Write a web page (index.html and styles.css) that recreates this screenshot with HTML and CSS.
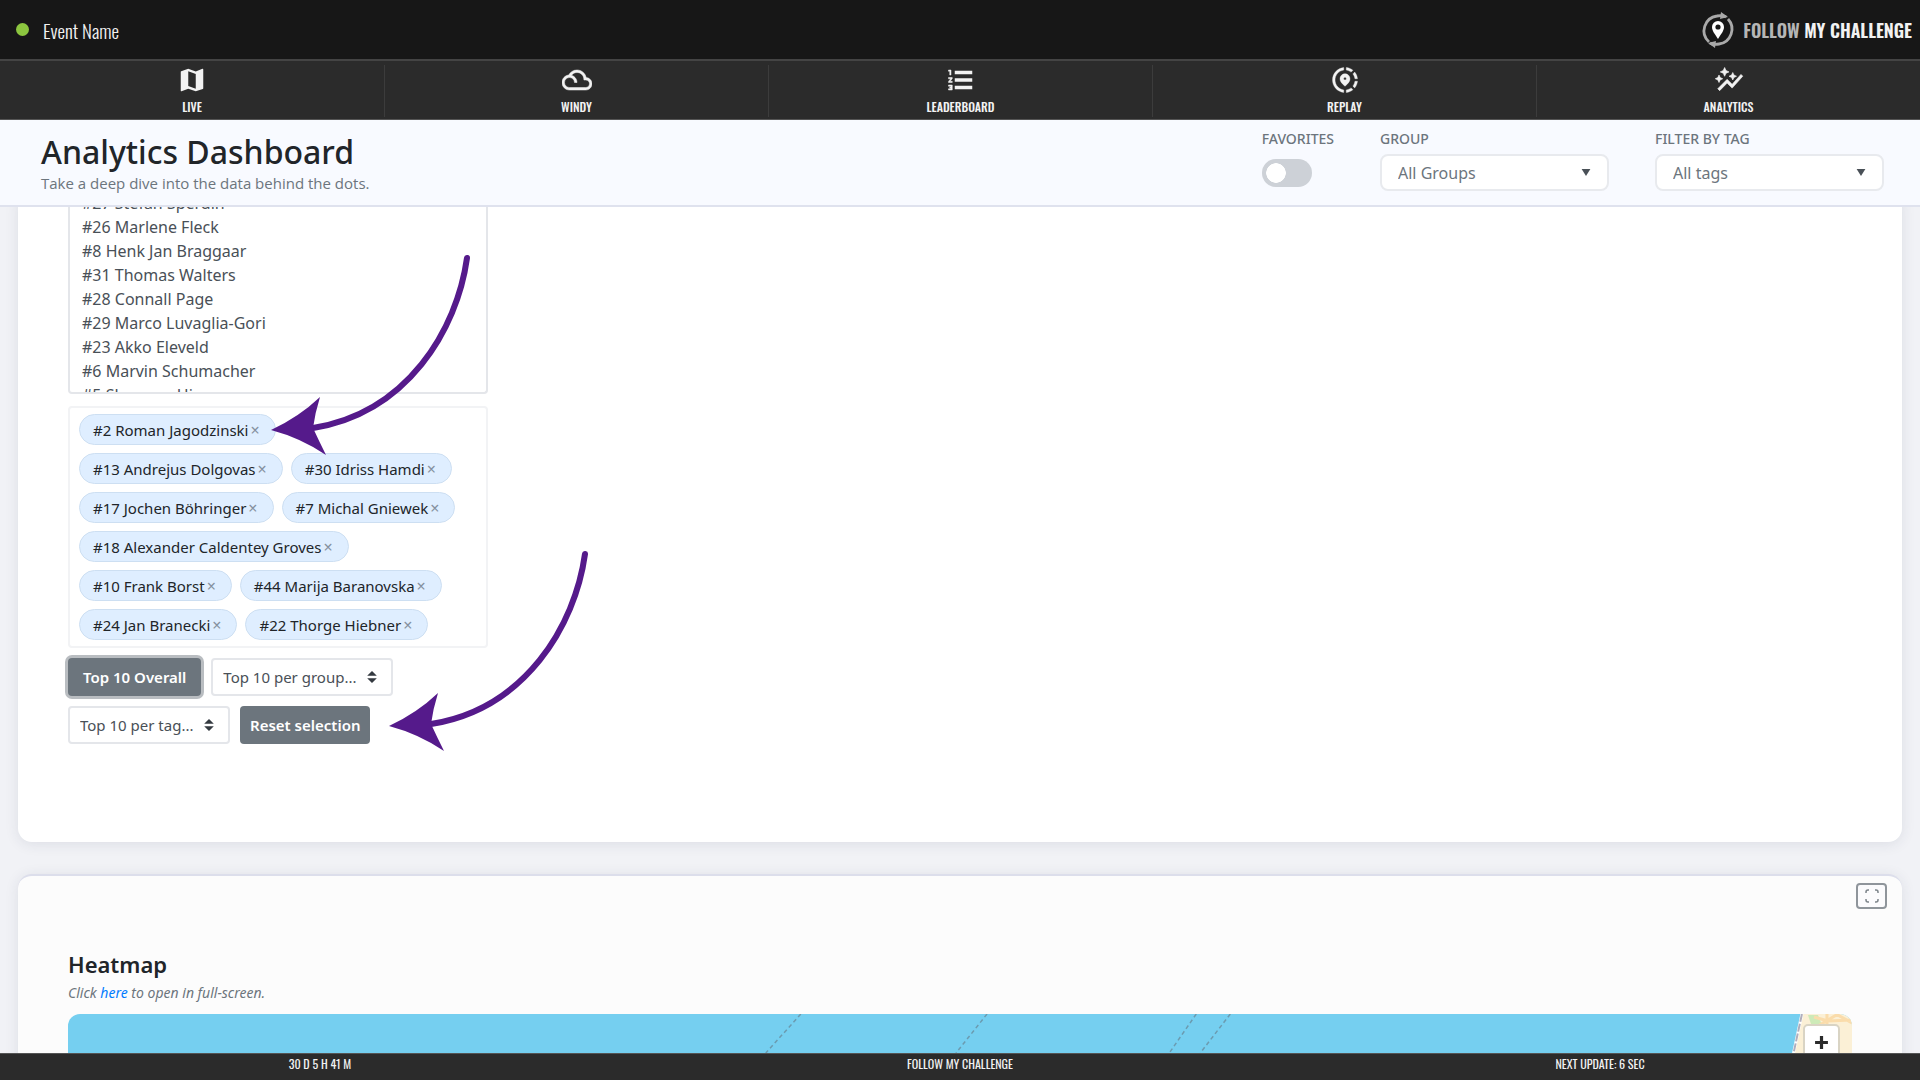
FILE: index.html
```html
<!DOCTYPE html>
<html lang="en">
<head>
    <meta charset="UTF-8">
    <meta name="viewport" content="width=device-width, initial-scale=1.0">
    <title>Analytics Dashboard</title>
    <link rel="stylesheet" href="styles.css">
</head>
<body>
    <header class="topbar">
        <div class="event"><span class="status-dot"></span>Event Name</div>
        <a href="#" class="brand">
            <svg class="brand-logo" viewBox="0 0 36 36">
                <g fill="none" stroke="#a9a9a9" stroke-width="2.8">
                    <path d="M9 30A15 15 0 0 1 17 4q6-1 9 1"/>
                    <path d="M28 7A15 15 0 0 1 19 32q-6 1-9-1"/>
                </g>
                <path d="M21 0l7 5-8 2zM15 36l-7-5 8-2z" fill="#a9a9a9"/>
                <path d="M18 27c-3-5-6-8-6-12a6 6 0 0 1 12 0c0 4-3 7-6 12z" fill="#fff"/>
                <circle cx="18" cy="15" r="2.6" fill="#171717"/>
            </svg>
            <span><span class="brand-light">FOLLOW</span> MY CHALLENGE</span>
        </a>
    </header>

    <nav class="tabs">
        <a href="#" class="tab">
            <svg viewBox="0 0 24 24"><path d="M20.5 3l-.16.03L15 5.100 9 3 3.360 4.900c-.21.07-.36.25-.36.48V20.500c0 .28.22.5.5.5l.16-.03L9 18.900l6 2.100 5.640-1.900c.21-.07.36-.25.36-.48V3.500c0-.28-.22-.5-.5-.5zM15 19l-6-2.110V5l6 2.110V19z"/></svg>
            LIVE
        </a>
        <a href="#" class="tab">
            <svg viewBox="0 0 24 24"><path d="M19.350 10.040C18.670 6.590 15.640 4 12 4 9.110 4 6.610 5.640 5.360 8.040 2.350 8.360 0 10.900 0 14c0 3.310 2.690 6 6 6h13c2.760 0 5-2.240 5-5 0-2.640-2.050-4.780-4.650-4.960zM19 18H6c-2.210 0-4-1.790-4-4s1.790-4 4-4 4 1.790 4 4h2c0-2.760-1.860-5.080-4.400-5.780C8.610 6.880 10.200 6 12 6c3.030 0 5.500 2.470 5.500 5.500v.5H19c1.650 0 3 1.350 3 3s-1.350 3-3 3z" stroke="#f2f2f2" stroke-width=".4"/></svg>
            WINDY
        </a>
        <a href="#" class="tab">
            <svg viewBox="0 0 24 24"><path d="M2 17h2v.5H3v1h1v.5H2v1h3v-4H2v1zm1-9h1V4H2v1h1v3zm-1 3h1.800L2 13.100v.9h3v-1H3.200L5 10.900V10H2v1z" stroke="#f2f2f2" stroke-width=".4"/><path d="M7 4.600v2.800h14V4.600zM7 10.600v2.800h14v-2.800zM7 16.600v2.800h14v-2.800z"/></svg>
            LEADERBOARD
        </a>
        <a href="#" class="tab">
            <svg viewBox="0 0 24 24"><path d="M13.020 19.930v2.020c2.010-.2 3.840-1 5.320-2.210l-1.420-1.430c-1.110.86-2.440 1.440-3.900 1.620zM4.030 12c0-4.050 3.030-7.410 6.950-7.930V2.050C5.950 2.580 2.030 6.840 2.030 12c0 5.160 3.920 9.420 8.950 9.950v-2.020c-3.920-.52-6.950-3.880-6.950-7.930zM19.950 11h2.020c-.2-2.010-1-3.840-2.210-5.320l-1.430 1.430c.86 1.100 1.440 2.430 1.620 3.890zM18.340 4.260c-1.480-1.210-3.320-2.010-5.320-2.210v2.020c1.460.18 2.790.76 3.900 1.620l1.420-1.430zM18.330 16.900l1.430 1.420c1.210-1.480 2.010-3.310 2.210-5.320h-2.020c-.18 1.460-.76 2.790-1.620 3.900zM16 11.100C16 8.610 14.100 7 12 7s-4 1.610-4 4.100c0 1.660 1.330 3.630 4 5.900 2.670-2.270 4-4.240 4-5.900zm-4 .9c-.59 0-1.070-.48-1.070-1.070S11.410 9.860 12 9.860s1.070.48 1.070 1.070S12.590 12 12 12z" stroke="#f2f2f2" stroke-width=".3"/></svg>
            REPLAY
        </a>
        <a href="#" class="tab">
            <svg viewBox="0 0 24 24"><path d="M14.060 9.940L12 9l2.060-.94L15 6l.94 2.060L18 9l-2.060.94L15 12l-.94-2.060zM4 14l.94-2.060L7 11l-2.060-.94L4 8l-.94 2.060L1 11l2.060.94L4 14zm4.500-5l1.090-2.410L12 5.500 9.590 4.410 8.500 2 7.410 4.410 5 5.500l2.410 1.090L8.500 9zm-4 11.500l6-6.010 4 4L23 8.930l-1.410-1.410-7.090 7.970-4-4L3 19l1.500 1.500z" stroke="#f2f2f2" stroke-width=".5"/></svg>
            ANALYTICS
        </a>
    </nav>

    <section class="page-head">
        <div>
            <h1>Analytics Dashboard</h1>
            <p class="lead">Take a deep dive into the data behind the dots.</p>
        </div>
        <form class="filters">
            <div class="filter">
                <label for="favorites">FAVORITES</label>
                <input type="checkbox" id="favorites" class="switch">
            </div>
            <div class="filter">
                <label for="group">GROUP</label>
                <select id="group" class="pick"><option>All Groups</option></select>
            </div>
            <div class="filter">
                <label for="tag">FILTER BY TAG</label>
                <select id="tag" class="pick"><option>All tags</option></select>
            </div>
        </form>
    </section>

    <main class="content">
        <section class="card card-riders">
            <div class="selector">
                <ul class="riders">
                    <li>#27 Stefan Sperdin</li>
                    <li>#26 Marlene Fleck</li>
                    <li>#8 Henk Jan Braggaar</li>
                    <li>#31 Thomas Walters</li>
                    <li>#28 Connall Page</li>
                    <li>#29 Marco Luvaglia-Gori</li>
                    <li>#23 Akko Eleveld</li>
                    <li>#6 Marvin Schumacher</li>
                    <li>#5 Shannon Hines</li>
                </ul>
                <div class="chips">
                    <span class="chip">#2 Roman Jagodzinski<button type="button" aria-label="Remove">×</button></span>
                    <span class="chip">#13 Andrejus Dolgovas<button type="button" aria-label="Remove">×</button></span>
                    <span class="chip">#30 Idriss Hamdi<button type="button" aria-label="Remove">×</button></span>
                    <span class="chip">#17 Jochen Böhringer<button type="button" aria-label="Remove">×</button></span>
                    <span class="chip">#7 Michal Gniewek<button type="button" aria-label="Remove">×</button></span>
                    <span class="chip">#18 Alexander Caldentey Groves<button type="button" aria-label="Remove">×</button></span>
                    <span class="chip">#10 Frank Borst<button type="button" aria-label="Remove">×</button></span>
                    <span class="chip">#44 Marija Baranovska<button type="button" aria-label="Remove">×</button></span>
                    <span class="chip">#24 Jan Branecki<button type="button" aria-label="Remove">×</button></span>
                    <span class="chip">#22 Thorge Hiebner<button type="button" aria-label="Remove">×</button></span>
                </div>
                <div class="actions">
                    <button type="button" class="btn btn-active">Top 10 Overall</button>
                    <select class="custom-select" aria-label="Top 10 per group"><option>Top 10 per group...</option></select>
                </div>
                <div class="actions">
                    <select class="custom-select" aria-label="Top 10 per tag"><option>Top 10 per tag...</option></select>
                    <button type="button" class="btn">Reset selection</button>
                </div>
            </div>
            <svg class="arrow arrow-chip" viewBox="0 0 208 208">
                <path class="arrow-line" d="M200 5C190 77 140 160 46 175"/>
                <path class="arrow-head" d="M4 177Q32 164 53 144Q48 160 46 175Q52 188 59 202Q34 185 4 177z"/>
            </svg>
            <svg class="arrow arrow-reset" viewBox="0 0 208 208">
                <path class="arrow-line" d="M200 5C190 77 140 160 46 175"/>
                <path class="arrow-head" d="M4 177Q32 164 53 144Q48 160 46 175Q52 188 59 202Q34 185 4 177z"/>
            </svg>
        </section>

        <section class="card card-heatmap">
            <button type="button" class="expand" aria-label="Full screen">
                <svg viewBox="0 0 14 14"><path d="M1 4V3q0-2 2-2h1M10 1h1q2 0 2 2v1M13 10v1q0 2-2 2h-1M4 13H3q-2 0-2-2v-1"/></svg>
            </button>
            <h2>Heatmap</h2>
            <p class="hint">Click <a href="#">here</a> to open in full-screen.</p>
            <div class="map">
                <svg class="map-tiles" viewBox="0 0 1782 60" preserveAspectRatio="xMaxYMin slice">
                    <rect width="1782" height="60" fill="#75cff0"/>
                    <path class="route" d="M732 0L697 39M918 0L887 39M1127 0L1100 39M1161 0L1131 39"/>
                    <path d="M1732 0h50v60h-62z" fill="#fbf0d6"/>
                    <path d="M1738 1h10l4 10-10 2z" fill="#cdeab8"/>
                    <path d="M1744 3l14 4 24-1M1757 0v12M1748 12l20-12M1766 0l16 9" fill="none" stroke="#fadcab" stroke-width="3"/>
                    <path d="M1732 0l-9 42" fill="none" stroke="#fff" stroke-width="3"/>
                    <path d="M1732 0l-9 42" fill="none" stroke="#b0aebc" stroke-width="2" stroke-dasharray="8 2"/>
                </svg>
                <button type="button" class="zoom-in" aria-label="Zoom in">
                    <svg viewBox="0 0 14 14"><path d="M7 1v12M1 7h12"/></svg>
                </button>
            </div>
        </section>
    </main>

    <footer class="bottombar">
        <span>30 D 5 H 41 M</span>
        <span>FOLLOW MY CHALLENGE</span>
        <span>NEXT UPDATE: 6 SEC</span>
    </footer>
</body>
</html>
```

FILE: styles.css
```css
:root {
    --dark: #171717;
    --bar: #2b2b2b;
    --text: #212529;
    --muted: #6c757d;
    --arrow: #551a8b;
    --narrow: "Oswald", "Open Sans Condensed", "Roboto Condensed", "Liberation Sans Narrow", "Roboto", sans-serif;
}
* {
    box-sizing: border-box;
    margin: 0;
    padding: 0;
}
body {
    font-family: "Segoe UI", "Noto Sans", sans-serif;
    font-size: 16px;
    color: var(--text);
    background: #f1f2f6;
    height: 100vh;
    display: flex;
    flex-direction: column;
    overflow: hidden;
}
a {
    text-decoration: none;
    color: inherit;
}
button,
select {
    font: inherit;
}

/* top bars */
.topbar {
    height: 61px;
    flex: none;
    display: flex;
    align-items: center;
    justify-content: space-between;
    padding: 0 8px 0 16px;
    background: var(--dark);
    border-bottom: 2px solid #444;
    color: #f2f2f2;
}
.event {
    display: flex;
    align-items: center;
    gap: 14px;
    font-family: var(--narrow);
    font-size: 19px;
    line-height: 24px;
    font-weight: 300;
}
.status-dot {
    width: 13px;
    height: 13px;
    border-radius: 50%;
    background: #8cc63f;
}
.brand {
    display: flex;
    align-items: center;
    gap: 7px;
    font-family: var(--narrow);
    font-size: 18px;
    font-weight: 600;
}
.brand-logo {
    width: 36px;
    height: 36px;
}
.brand-light {
    color: #b5b5b5;
}
.tabs {
    height: 59px;
    flex: none;
    display: grid;
    grid-template-columns: repeat(5, 1fr);
    padding: 4px 0 2px;
    background: var(--bar);
    border-bottom: 1px solid #555;
}
.tab {
    display: flex;
    flex-direction: column;
    align-items: center;
    gap: 3px;
    font-family: var(--narrow);
    font-size: 12px;
    line-height: 18px;
    font-weight: 500;
    color: #f2f2f2;
    border-left: 1px solid #3c3c3c;
}
.tab:first-child {
    border-left: none;
}
.tab svg {
    width: 30px;
    height: 30px;
    fill: #f2f2f2;
}

/* title and filters */
.page-head {
    height: 87px;
    flex: none;
    display: flex;
    justify-content: space-between;
    padding: 9px 36px 0 41px;
    background: #f8faff;
    border-bottom: 2px solid #dfe2ee;
}
h1 {
    font-size: 32px;
    line-height: 46px;
    font-weight: 500;
}
.lead {
    font-family: "Open Sans", sans-serif;
    font-size: 15px;
    line-height: 16px;
    color: var(--muted);
}
.filters {
    display: flex;
    gap: 46px;
}
.filter {
    display: flex;
    flex-direction: column;
    gap: 5px;
}
.filter label {
    font-size: 14px;
    line-height: 20px;
    font-weight: 500;
    color: var(--muted);
}
.switch {
    appearance: none;
    width: 50px;
    height: 28px;
    margin-top: 5px;
    border-radius: 14px;
    background: radial-gradient(circle 10px at 14px 14px, #fff 95%, transparent) #cdd1d7;
}
.pick {
    appearance: none;
    width: 229px;
    height: 37px;
    padding: 0 16px;
    border: 2px solid #e8eaee;
    border-radius: 8px;
    background: #fff url("data:image/svg+xml,%3Csvg xmlns='http://www.w3.org/2000/svg' viewBox='0 0 10 8'%3E%3Cpath d='M0 0h10L5 8z' fill='%23495057'/%3E%3C/svg%3E") no-repeat right 16px center / 10px 7px;
    color: var(--muted);
}

/* cards */
.content {
    flex: 1;
    min-height: 0;
    overflow: hidden;
    padding: 0 18px;
}
.card {
    position: relative;
    border-radius: 14px;
    box-shadow: 0 2px 14px rgba(40, 50, 80, 0.1);
}
.card-riders {
    margin-top: -16px;
    padding: 0 50px 98px;
    background: #fff;
}
.selector {
    width: 420px;
}
.riders {
    list-style: none;
    height: 203px;
    overflow: hidden;
    border: 2px solid #e4e6ea;
    border-top: none;
    border-radius: 0 0 4px 4px;
    padding: 0 12px;
    line-height: 24px;
    color: #495057;
}
.chips {
    display: flex;
    flex-wrap: wrap;
    gap: 8px;
    margin-top: 12px;
    padding: 6px 9px;
    border: 2px solid #f2f3f5;
    border-radius: 4px;
}
.chip {
    display: flex;
    align-items: center;
    height: 31px;
    padding: 0 13px;
    border: 1px solid #cddff2;
    border-radius: 16px;
    background: #dfeeff;
    font-size: 15px;
}
.chip button {
    border: none;
    background: none;
    padding: 0 2px;
    font-size: 16px;
    color: #8591a0;
}
.actions {
    display: flex;
    gap: 10px;
    margin-top: 10px;
}
.btn {
    height: 38px;
    padding: 0 10px;
    border: none;
    border-radius: 4px;
    background: var(--muted);
    color: #fff;
    font-size: 15px;
    font-weight: 600;
}
.btn-active {
    padding: 0 15px;
    box-shadow: 0 0 0 3px #b9bdc1;
}
.custom-select {
    appearance: none;
    height: 38px;
    padding: 0 34px 0 10px;
    border: 2px solid #e4e6ea;
    border-radius: 4px;
    background: #fff url("data:image/svg+xml,%3Csvg xmlns='http://www.w3.org/2000/svg' viewBox='0 0 4 5'%3E%3Cpath fill='%23343a40' d='M2 0L0 2h4zm0 5L0 3h4z'/%3E%3C/svg%3E") no-repeat right 14px center / 10px 12px;
    color: #495057;
    font-size: 15px;
}

/* pointers drawn over the card */
.arrow {
    position: absolute;
    width: 208px;
    height: 208px;
}
.arrow-chip {
    left: 249px;
    top: 62px;
}
.arrow-reset {
    left: 367px;
    top: 358px;
}
.arrow-line {
    fill: none;
    stroke: var(--arrow);
    stroke-width: 6;
    stroke-linecap: round;
}
.arrow-head {
    fill: var(--arrow);
}

/* heatmap */
.card-heatmap {
    margin-top: 32px;
    padding: 72px 50px 0;
    background: #fcfcfc;
    border-top: 2px solid #dcdeeb;
}
.expand {
    position: absolute;
    top: 7px;
    right: 15px;
    width: 31px;
    height: 26px;
    display: flex;
    align-items: center;
    justify-content: center;
    border: 2px solid #8f959b;
    border-radius: 4px;
    background: #fbfbfd;
}
.expand svg {
    width: 14px;
    height: 14px;
    fill: none;
    stroke: #7d848a;
    stroke-width: 1.5;
}
h2 {
    font-size: 22px;
    line-height: 32px;
    font-weight: 600;
}
.hint {
    font-size: 14px;
    line-height: 26px;
    font-style: italic;
    color: var(--muted);
}
.hint a {
    color: #007bff;
}
.map {
    position: relative;
    margin-top: 8px;
    border-radius: 12px;
    overflow: hidden;
}
.map-tiles {
    display: block;
    width: 100%;
    height: 60px;
}
.route {
    fill: none;
    stroke: #6b9bb0;
    stroke-width: 1.5;
    stroke-dasharray: 4 3;
}
.zoom-in {
    position: absolute;
    top: 10px;
    right: 12px;
    width: 37px;
    height: 37px;
    display: flex;
    align-items: center;
    justify-content: center;
    border: 2px solid #d9d4c4;
    border-radius: 5px;
    background: #fff;
}
.zoom-in svg {
    width: 15px;
    height: 15px;
    stroke: #2b2b2b;
    stroke-width: 3;
}

.bottombar {
    height: 27px;
    flex: none;
    display: grid;
    grid-template-columns: repeat(3, 1fr);
    background: var(--bar);
    border-top: 1px solid #555;
    font-family: var(--narrow);
    font-size: 12px;
    line-height: 20px;
    font-weight: 400;
    text-align: center;
    color: #f2f2f2;
}
```
